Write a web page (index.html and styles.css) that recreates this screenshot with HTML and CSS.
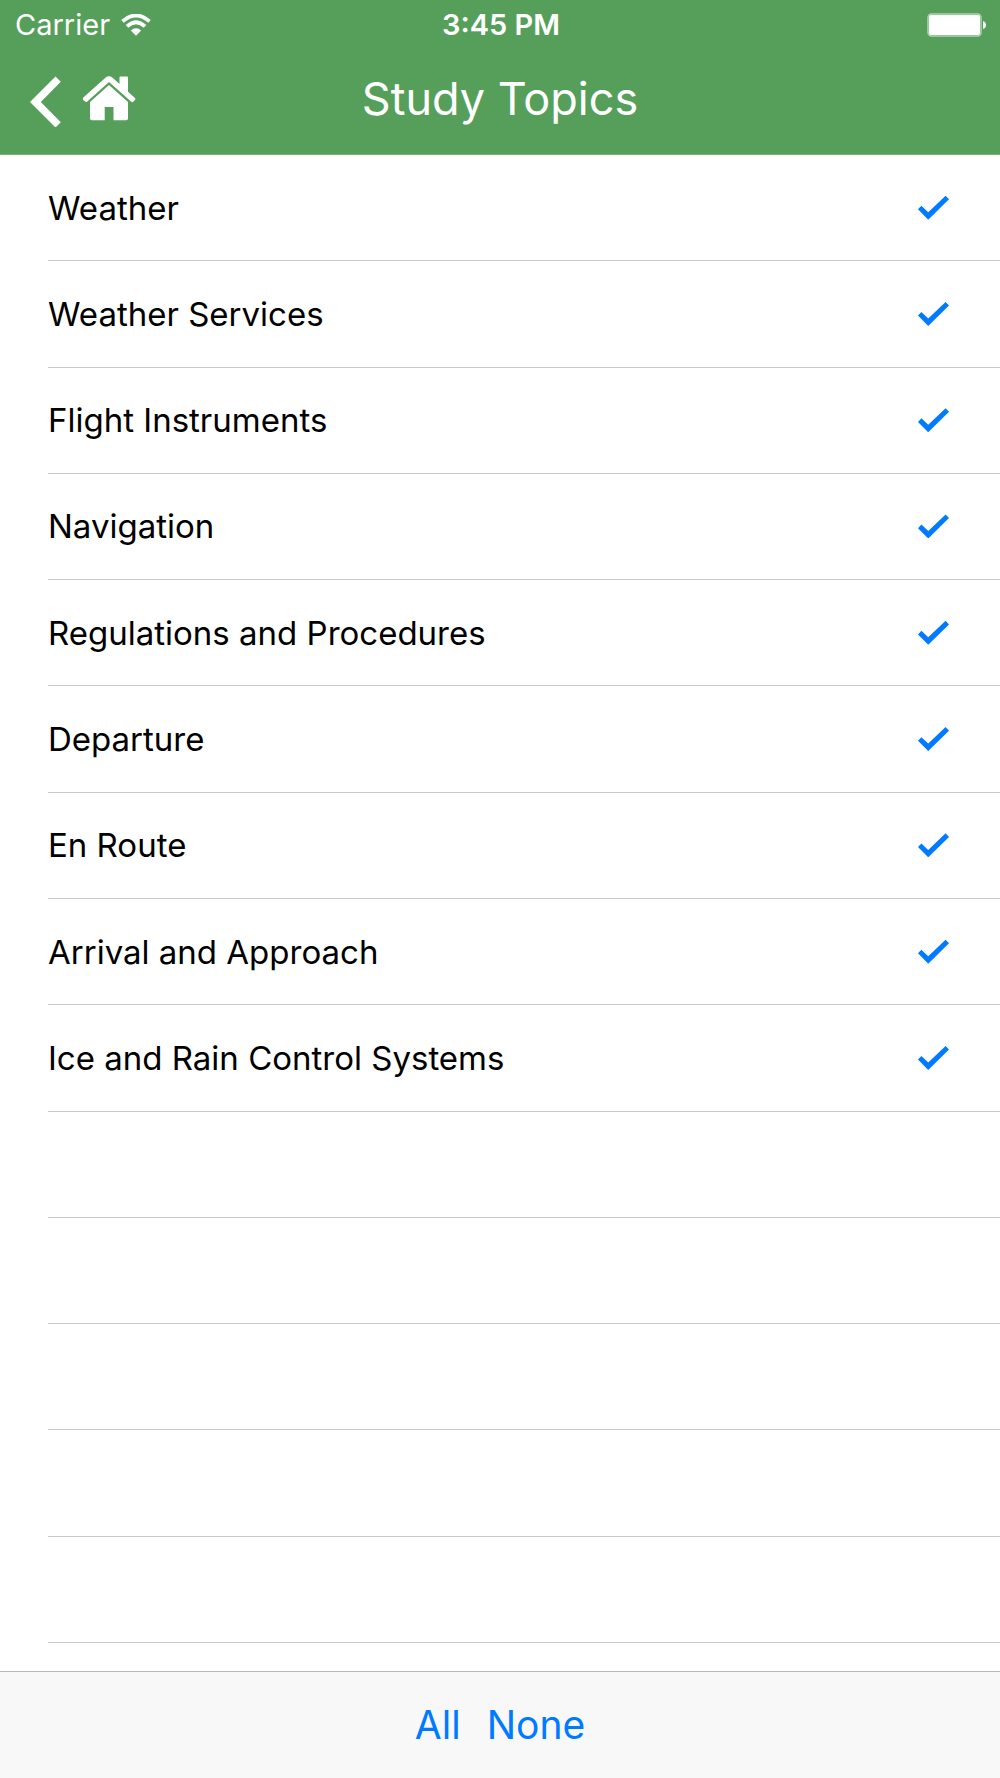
FILE: index.html
```html
<!DOCTYPE html>
<html lang="en">
<head>
<meta charset="utf-8">
<meta name="viewport" content="width=device-width, initial-scale=1">
<title>Study Topics</title>
<link rel="stylesheet" href="styles.css">
</head>
<body>
<div class="screen">
  <header class="header">
    <div class="status">
      <div class="carrier">
        <span>Carrier</span>
        <svg class="wifi" viewBox="0 0 30 22" aria-hidden="true">
          <path d="M1.500 7.400Q15 -4.600 28.500 7.400M6 12.300Q15 4 24 12.300" fill="none" stroke="#fff" stroke-width="3.800"/>
          <path d="M9.800 16.600Q15 12 20.200 16.600L15 21.700Z" fill="#fff"/>
        </svg>
      </div>
      <span class="time">3:45 PM</span>
      <svg class="battery" viewBox="0 0 60 24" aria-hidden="true">
        <rect x="1" y="1" width="53" height="22" rx="3.500" fill="none" stroke="#b3d5b5" stroke-width="1.500"/>
        <rect x="2" y="2" width="51" height="20" rx="2" fill="#fff"/>
        <path d="M56 8Q59 9 59 12T56 16Z" fill="#fff"/>
      </svg>
    </div>
    <nav class="nav">
      <div class="actions">
        <button class="icon-button" type="button" aria-label="Back">
          <svg width="31" height="56" viewBox="30 71 31 56"><path d="M55.500 76.500L60.800 81.700L40.800 102L60.800 122.300L55.500 127.500L30 102Z" fill="#fff"/></svg>
        </button>
        <button class="icon-button" type="button" aria-label="Home">
          <svg width="53" height="56" viewBox="83 71 53 56" fill="#fff">
            <path d="M83.300 97.500L106 77.300Q109 75.300 112 77.300L119.500 84V77.500Q119.500 76.500 120.500 76.500H127Q128 76.500 128 77.500V91.700L134.700 97.700Q136 99 134.700 100.300L133.300 101.700Q132.300 102.700 131 101.500L109 82L87.300 101.500Q86 102.700 84.700 101.300L83.300 100Q82.300 98.700 83.300 97.500Z"/>
            <path d="M109 85L128 102V118.500Q128 120.300 126.200 120.300H113.500V107H104.700V120.300H91.800Q90 120.300 90 118.500V102Z"/>
          </svg>
        </button>
      </div>
      <h1 class="title">Study Topics</h1>
    </nav>
  </header>

  <main class="topics">
    <label class="row"><span>Weather</span><input class="check" type="checkbox" checked></label>
    <label class="row"><span>Weather Services</span><input class="check" type="checkbox" checked></label>
    <label class="row"><span>Flight Instruments</span><input class="check" type="checkbox" checked></label>
    <label class="row"><span>Navigation</span><input class="check" type="checkbox" checked></label>
    <label class="row"><span>Regulations and Procedures</span><input class="check" type="checkbox" checked></label>
    <label class="row"><span>Departure</span><input class="check" type="checkbox" checked></label>
    <label class="row"><span>En Route</span><input class="check" type="checkbox" checked></label>
    <label class="row"><span>Arrival and Approach</span><input class="check" type="checkbox" checked></label>
    <label class="row"><span>Ice and Rain Control Systems</span><input class="check" type="checkbox" checked></label>
    <div class="row"></div>
    <div class="row"></div>
    <div class="row"></div>
    <div class="row"></div>
    <div class="row"></div>
  </main>

  <footer class="toolbar">
    <button class="text-button" type="button">All</button>
    <button class="text-button" type="button">None</button>
  </footer>
</div>
</body>
</html>
```
FILE: styles.css
```css
* {
  box-sizing: border-box;
}

body {
  margin: 0;
  background: #fff;
  color: #000;
  font-family: Inter, "Liberation Sans", sans-serif;
}

button {
  padding: 0;
  border: 0;
  background: none;
  font: inherit;
  cursor: pointer;
}

svg {
  display: block;
}

.screen {
  display: flex;
  flex-direction: column;
  min-height: 100vh;
}

.header {
  border-bottom: 1px solid #7ab47d;
  background: #559f5a;
  color: #fff;
}

.status,
.nav {
  display: grid;
  grid-template-columns: 1fr auto 1fr;
  align-items: center;
}

.status {
  height: 50px;
  padding: 0 13px 0 15px;
  font-size: 29px;
  line-height: 32px;
}

.carrier {
  display: flex;
  align-items: center;
  gap: 11px;
}

.wifi {
  width: 30px;
  height: 22px;
}

.time {
  font-weight: 600;
}

.battery {
  justify-self: end;
  width: 60px;
  height: 24px;
}

.nav {
  height: 104px;
  padding: 0 30px 6px;
}

.actions {
  display: flex;
  gap: 22px;
}

.title {
  margin: 0;
  font-size: 45px;
  font-weight: 400;
  line-height: 56px;
}

.topics {
  display: grid;
  flex: 1;
  grid-auto-rows: minmax(88px, 1fr);
  padding: 0 0 28px 48px;
}

.row {
  display: flex;
  align-items: center;
  justify-content: space-between;
  padding-right: 51px;
  border-bottom: 1px solid #c8c8cc;
  font-size: 33px;
  line-height: 40px;
}

.check {
  width: 31px;
  height: 24px;
  margin: 0;
  appearance: none;
  clip-path: polygon(0 57%, 11% 42%, 33% 69%, 89% 0, 100% 15%, 33% 100%);
}

.check:checked {
  background: #007aff;
}

.toolbar {
  display: flex;
  align-items: center;
  justify-content: center;
  gap: 26px;
  height: 107px;
  border-top: 1px solid #b8b8b8;
  background: #f8f8f8;
}

.text-button {
  color: #007aff;
  font-size: 39px;
  line-height: 48px;
}
```
